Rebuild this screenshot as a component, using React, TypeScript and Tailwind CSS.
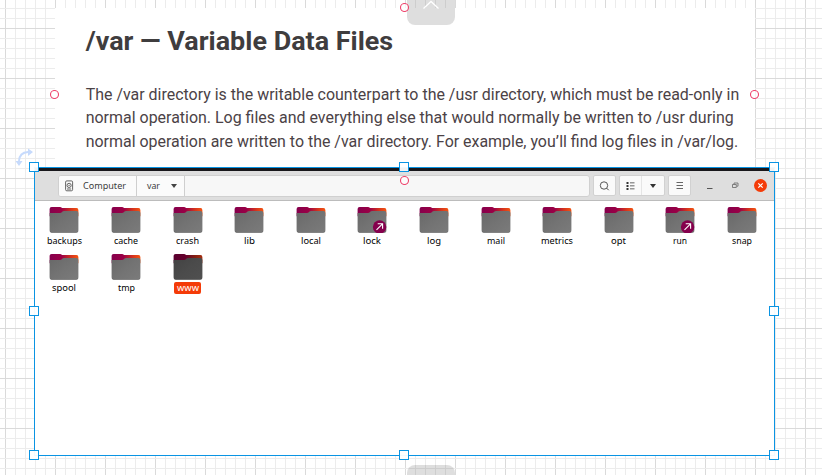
import React from 'react';

const folders = ['backups', 'cache', 'crash', 'lib', 'local', 'lock', 'log', 'mail', 'metrics', 'opt', 'run', 'snap', 'spool', 'tmp', 'www'];

const labelWidths: Record<string, number> = {
  backups: 35, cache: 24, crash: 23, lib: 11, local: 20, lock: 18, log: 14, mail: 18,
  metrics: 32, opt: 15, run: 14, snap: 20, spool: 24, tmp: 17, www: 22,
};

function Grid() {
  return (
    <svg className="absolute inset-0" width="822" height="475" shapeRendering="crispEdges">
      {Array.from({ length: 82 }, (_, i) => (
        <rect key={i} x={5 + i * 10} y="0" width="1" height="475" fill={i % 5 === 0 ? '#dadada' : '#ececec'} />
      ))}
      {Array.from({ length: 47 }, (_, i) => (
        <rect key={i} x="0" y={8 + i * 10} width="822" height="1" fill={i % 5 === 2 ? '#dadada' : '#ececec'} />
      ))}
    </svg>
  );
}

function Folder({ name }: { name: string }) {
  const selected = name === 'www';
  const linked = name === 'lock' || name === 'run';
  const id = 'f-' + name;
  return (
    <div className="flex h-[47px] w-[61.6px] flex-col items-center">
      <svg width="30" height="27" viewBox="0 0 30 27" className="shrink-0">
        <defs>
          <linearGradient id={id + 'a'} x1="0" x2="1" y1="0" y2="0">
            <stop offset="0" stopColor={selected ? '#59002f' : '#85004d'} />
            <stop offset=".42" stopColor={selected ? '#65002c' : '#9b0045'} />
            <stop offset=".75" stopColor={selected ? '#822012' : '#d6351c'} />
            <stop offset="1" stopColor={selected ? '#a83010' : '#f45512'} />
          </linearGradient>
          <linearGradient id={id + 'b'} x1="0" x2="1" y1="0" y2="1">
            <stop offset="0" stopColor={selected ? '#424242' : '#686868'} />
            <stop offset=".5" stopColor={selected ? '#4b4b4b' : '#737373'} />
            <stop offset="1" stopColor={selected ? '#505050' : '#7b7b7b'} />
          </linearGradient>
        </defs>
        <path d="M.6 9V2.900Q.6.900 2.600.900h8.400Q12.300.900 13 2.100H27.500Q29.400 2.100 29.400 4.200v6H.6Z" fill={`url(#${id}a)`} />
        <path d="M.6 7.100h10.400q1.200 0 2-1.100t2.200-1.100h12.200q2 0 2 2V24.500q0 2.300-2.500 2.300H3Q.6 26.800 .6 24.500Z" fill={`url(#${id}b)`} />
        <path d="M1 25.300q.7 1.300 2 1.300h24q1.500 0 2-1.300" fill="none" stroke="#444" strokeOpacity=".4" strokeWidth=".7" />
        {linked && (
          <g>
            <circle cx="22.600" cy="20.900" r="6.700" fill="#85004d" />
            <path d="m19.500 23.900 6-6m-4.800-.1h4.900v4.900" fill="none" stroke="white" strokeWidth="1.100" />
          </g>
        )}
      </svg>
      <span className={`mt-[2px] flex h-[12px] w-[27px] shrink-0 items-center justify-center rounded-[2px] ${selected ? 'bg-[#f43b08] text-white' : 'text-black'}`}>
        <svg width={labelWidths[name]} height="12" className="shrink-0 overflow-visible">
          <text x="0" y="9" fill="currentColor" fontSize="9.500" textLength={labelWidths[name]} lengthAdjust="spacingAndGlyphs" className="font-['Noto_Sans',sans-serif]">{name}</text>
        </svg>
      </span>
    </div>
  );
}

const button = 'flex h-[21px] items-center justify-center rounded-[2px] border border-[#d1d1d1] bg-[#fafafa] text-[#444]';

function Toolbar() {
  return (
    <div className="flex h-[30px] shrink-0 items-center border-b border-[#bcbcbc] bg-[#dedede] pl-[23px] font-['Noto_Sans',sans-serif] text-[9.5px] text-[#444]">
      <div className="flex h-[22px] w-[532px] overflow-hidden rounded-[3px] border border-[#d0d0d0] bg-[#f7f7f7]">
        <div className="flex w-[78px] items-center border-r border-[#cfcfcf] bg-[#fbfbfb] pl-[6px]">
          <svg width="9" height="12" viewBox="0 0 9 12" fill="none" stroke="#555" className="mr-[9px]">
            <rect x=".6" y=".9" width="7" height="9.900" rx="1.200" strokeWidth=".9" />
            <circle cx="4.100" cy="5.400" r="2.100" strokeWidth=".9" />
            <circle cx="4.100" cy="5.400" r=".5" strokeWidth=".6" />
            <path d="M2 9h4.200" strokeWidth=".9" />
          </svg>
          <svg width="43" height="12" className="overflow-visible"><text x="0" y="9" fontSize="9.500" fill="#3c3c3c" textLength="43" lengthAdjust="spacingAndGlyphs">Computer</text></svg>
        </div>
        <div className="flex w-[48px] items-center justify-between border-r border-[#cfcfcf] bg-[#fbfbfb] pl-[10px] pr-[7px]">
          <svg width="13" height="12" className="overflow-visible"><text x="0" y="9" fontSize="9.500" fill="#3c3c3c" textLength="13" lengthAdjust="spacingAndGlyphs">var</text></svg>
          <svg width="6" height="4"><path d="M0 0h6L3 4Z" fill="#444" /></svg>
        </div>
      </div>
      <div className={`${button} ml-[3px] w-[23px]`}>
        <svg width="12" height="12" viewBox="0 0 12 12" fill="none" stroke="currentColor"><circle cx="5" cy="5.500" r="3.700" strokeWidth=".9" /><path d="m7.700 8.200 2 2" /></svg>
      </div>
      <div className={`${button} ml-[3px] w-[46px]`}>
        <div className="flex h-full w-[22px] items-center justify-center border-r border-[#e5e5e5]">
          <svg width="9" height="9" viewBox="0 0 9 9" fill="#333"><path d="M.5 1h2v2h-2zM.5 4h2v2h-2zM.5 7h2v2h-2zM4 1.500h4.500v.8H4zM4 4.500h4.500v.8H4zM4 7.500h4.500v.8H4z" /></svg>
        </div>
        <div className="flex flex-1 justify-center"><svg width="6" height="4"><path d="M0 0h6L3 4Z" fill="#333" /></svg></div>
      </div>
      <div className={`${button} ml-[3px] w-[23px]`}>
        <svg width="8" height="8" stroke="#555" fill="none" className="-mt-[1px]"><path d="M.5 1.500h6.500m-6.500 3h6.500m-6.500 3h6.500" strokeWidth=".9" /></svg>
      </div>
      <svg className="ml-[16px]" width="6" height="8"><path d="M0 6.500h5.500" stroke="#555" /></svg>
      <svg className="ml-[19px]" width="7" height="7" fill="none" stroke="#666" strokeWidth=".8"><path d="M2 2.400V1h4v3.200H5M.5 2.500h3.800v3H.5Z" /></svg>
      <svg className="ml-[15px]" width="13" height="13" viewBox="0 0 13 13"><circle cx="6.500" cy="6.500" r="6.500" fill="#f43b08" /><path d="m4.300 4.300 4.400 4.400m0-4.400L4.300 8.700" stroke="white" strokeWidth="1.200" /></svg>
    </div>
  );
}

const handles = [
  'left-[29px] top-[162px]', 'left-[399px] top-[162px]', 'left-[769px] top-[162px]',
  'left-[29px] top-[306px]', 'left-[769px] top-[306px]',
  'left-[29px] top-[450px]', 'left-[399px] top-[450px]', 'left-[769px] top-[450px]',
];
const anchors = ['left-[50px] top-[90px]', 'left-[750px] top-[90px]', 'left-[400px] top-[3px]', 'left-[400px] top-[176px]'];

const articleLines: [string, number][] = [
  ['The /var directory is the writable counterpart to the /usr directory, which must be read-only in', 653.5],
  ['normal operation. Log files and everything else that would normally be written to /usr during', 648],
  ['normal operation are written to the /var directory. For example, you’ll find log files in /var/log.', 652.5],
];

export default function App() {
  return (
    <main className="relative h-[475px] w-[822px] overflow-hidden bg-white">
      <Grid />
      <article className="absolute left-[55px] top-[8px] h-[160px] w-[700px] bg-white pl-[31px] font-['Roboto',sans-serif] text-[#453f42]">
        <svg width="660" height="158" className="overflow-visible">
          <text x="-.3" y="42" fontSize="26.700" fontWeight="700" fill="#3f3d3e" textLength="307.500" lengthAdjust="spacingAndGlyphs">/var — Variable Data Files</text>
          {articleLines.map(([line, width], i) => (
            <text key={line} x="-.3" y={92 + i * 23.3} fontSize="16" fill="#4b4246" textLength={width} lengthAdjust="spacingAndGlyphs">{line}</text>
          ))}
        </svg>
      </article>

      <div className="absolute left-[407px] top-[-12px] h-[37px] w-[48px] rounded-[8px] bg-black/[.13]">
        <svg className="mt-[12px]" width="48" height="10" fill="none" stroke="white"><path d="m16.500 8.500 7.500-7 7.500 7" strokeWidth="1.300" /></svg>
      </div>
      <div className="absolute left-[407px] top-[465px] h-[30px] w-[48px] rounded-[8px] bg-black/[.13]" />

      <svg className="absolute left-[15px] top-[148px]" width="20" height="20" fill="none" stroke="#c6dafc" strokeWidth="2">
        <path d="M4 13Q4.500 4.500 13 4" /><path d="m13 .5 5 3.500-5 4ZM.5 13H7.500l-3.500 5Z" fill="#c6dafc" stroke="none" />
      </svg>

      <section className="absolute left-[34px] top-[167px] flex h-[289px] w-[741px] flex-col border border-[#0a94e3] bg-white">
        <div className="h-[3px] shrink-0 bg-[#18171b]" />
        <Toolbar />
        <div className="-ml-[1.400px] flex w-[740px] flex-wrap pt-[5px]">
          {folders.map((name) => <Folder key={name} name={name} />)}
        </div>
      </section>
      {anchors.map((position) => (
        <svg key={position} className={`absolute ${position}`} width="9" height="9"><circle cx="4.500" cy="4.500" r="4" fill="white" fillOpacity=".7" stroke="#ee466e" strokeWidth="1.100" /></svg>
      ))}
      {handles.map((position) => <div key={position} className={`absolute h-[10px] w-[10px] border border-[#0a94e3] bg-white/95 ${position}`} />)}
    </main>
  );
}
